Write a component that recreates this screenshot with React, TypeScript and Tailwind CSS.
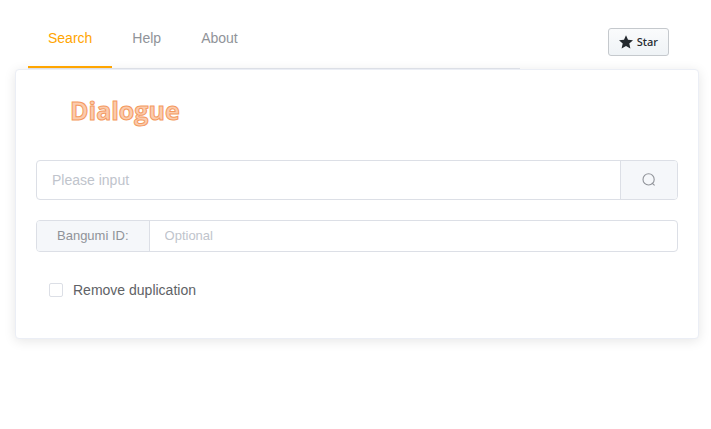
import { useState } from "react";
import clsx from "clsx";

const tabs = ["Search", "Help", "About"];

function SearchIcon() {
  return (
    <svg width="14" height="14" viewBox="0 0 14 14" fill="none" stroke="currentColor" strokeWidth="1.1" aria-hidden="true">
      <circle cx="6.6" cy="6.4" r="5.6" />
      <path d="M9.8 9.8 L12.6 12.4" />
    </svg>
  );
}

function StarIcon() {
  return (
    <svg width="14" height="14" viewBox="0 0 14 14" fill="#24292e" aria-hidden="true">
      <path d="M7 .2 9 4.7l5 .5-3.7 3.3 1.1 4.9L7 10.9l-4.4 2.5 1.1-4.9L0 5.2l5-.5z" />
    </svg>
  );
}

function Header() {
  const [active, setActive] = useState("Search");

  return (
    <header className="flex items-start pt-2 pr-[42px] pl-7">
      <nav className="flex w-[76.7%] border-b border-[#dcdfe6]">
        {tabs.map((tab) => (
          <a
            key={tab}
            href={`#${tab.toLowerCase()}`}
            onClick={() => setActive(tab)}
            className={clsx(
              "h-[60px] border-b-2 px-5 text-sm leading-[60px]",
              active === tab ? "border-[#ffa500] text-[#ffa500]" : "border-transparent text-[#909399]"
            )}
          >
            {tab}
          </a>
        ))}
      </nav>
      <button
        type="button"
        className="mt-5 ml-auto flex h-7 items-center gap-1 rounded-[3px] border border-[#c5c9cd] bg-gradient-to-b from-[#fafbfc] to-[#eff3f6] px-[10px] font-['Noto_Sans',sans-serif] text-[11px] font-medium text-[#24292e]"
      >
        <StarIcon />
        Star
      </button>
    </header>
  );
}

function SearchForm() {
  const [keyword, setKeyword] = useState("");
  const [bangumiId, setBangumiId] = useState("");
  const [unique, setUnique] = useState(false);

  return (
    <form onSubmit={(e) => e.preventDefault()}>
      <div className="flex h-10 overflow-hidden rounded border border-[#dcdfe6]">
        <input
          type="text"
          aria-label="Search text"
          placeholder="Please input"
          value={keyword}
          onChange={(e) => setKeyword(e.target.value)}
          className="min-w-0 flex-1 px-[15px] text-sm text-[#606266] outline-none placeholder:text-[#c0c4cc]"
        />
        <button
          type="submit"
          aria-label="Search"
          className="flex items-center border-l border-[#dcdfe6] bg-[#f5f7fa] px-[21px] text-[#909399]"
        >
          <SearchIcon />
        </button>
      </div>

      <div className="mt-5 flex h-8 overflow-hidden rounded border border-[#dcdfe6] text-[13px]">
        <label
          htmlFor="bangumi-id"
          className="flex items-center border-r border-[#dcdfe6] bg-[#f5f7fa] px-5 text-[#909399]"
        >
          Bangumi ID:
        </label>
        <input
          id="bangumi-id"
          type="text"
          placeholder="Optional"
          value={bangumiId}
          onChange={(e) => setBangumiId(e.target.value)}
          className="min-w-0 flex-1 px-[15px] text-[#606266] outline-none placeholder:text-[#c0c4cc]"
        />
      </div>

      <label className="mt-7 ml-[13px] flex w-fit items-center gap-[10px] text-sm text-[#606266]">
        <input
          type="checkbox"
          checked={unique}
          onChange={(e) => setUnique(e.target.checked)}
          className="size-[14px] appearance-none rounded-xs border border-[#dcdfe6] bg-white checked:border-[#ffa500] checked:bg-[#ffa500]"
        />
        Remove duplication
      </label>
    </form>
  );
}

export default function App() {
  return (
    <div className="min-h-screen bg-white font-['Liberation_Sans',Arial,sans-serif]">
      <Header />
      <main className="mr-3 ml-[15px] rounded border border-[#ebeef5] bg-white px-5 pt-5 pb-[38px] shadow-[0_2px_12px_0_rgba(0,0,0,0.1)]">
        <h1 className="mb-[30px] ml-[34px] h-10 font-['Open_Sans',sans-serif] text-[25px] leading-10 font-bold text-[#fbcbad] [-webkit-text-stroke:1px_#f49a60]">
          Dialogue
        </h1>
        <SearchForm />
      </main>
    </div>
  );
}
